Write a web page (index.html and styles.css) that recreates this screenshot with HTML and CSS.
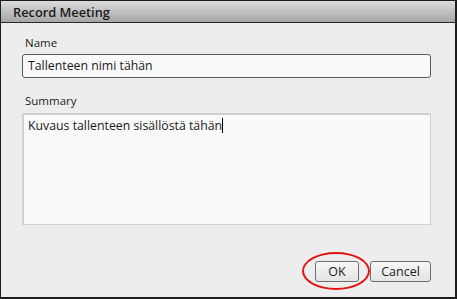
FILE: index.html
```html
<!DOCTYPE html>
<html>
<head>
<meta charset="utf-8">
<link rel="stylesheet" href="styles.css">
</head>
<body>
<div class="dialog">
  <div class="titlebar">Record Meeting</div>
  <div class="content">
    <div class="label label-name">Name</div>
    <div class="input">Tallenteen nimi tähän</div>
    <div class="label label-summary">Summary</div>
    <div class="textarea">Kuvaus tallenteen sisällöstä tähän<span class="caret"></span></div>
    <div class="buttons">
      <div class="btn btn-ok">OK<span class="circle"></span></div>
      <div class="btn btn-cancel">Cancel</div>
    </div>
  </div>
</div>
</body>
</html>
```

FILE: styles.css
```css
html, body {
  margin: 0;
  padding: 0;
  background: #ededed;
}
.dialog {
  width: 457px;
  height: 299px;
  box-sizing: border-box;
  border-top: 1px solid #1c1c1c;
  border-left: 1px solid #1c1c1c;
  border-right: 2px solid #1c1c1c;
  border-bottom: 2px solid #1c1c1c;
  background: #ededed;
  display: flex;
  flex-direction: column;
  font-family: "Open Sans", "DejaVu Sans", sans-serif;
  color: #222;
}
.titlebar {
  height: 21px;
  border-bottom: 1px solid #2a2a2a;
  background: linear-gradient(#dadada, #a6a6a6);
  font-weight: 600;
  font-size: 12.8px;
  line-height: 22px;
  padding-left: 12px;
  color: #1a1a1a;
}
.content {
  flex: 1;
  display: flex;
  flex-direction: column;
  padding: 0 24px 0 21px;
}
.label {
  font-size: 11.5px;
  line-height: 14px;
  padding-left: 3px;
  color: #222;
}
.label-name {
  margin-top: 13px;
}
.input {
  margin-top: 4px;
  height: 22px;
  box-sizing: content-box;
  border: 1px solid #5a5a5a;
  border-radius: 3px;
  background: #f9f9f9;
  font-size: 12.3px;
  line-height: 22px;
  padding-left: 5px;
  color: #1a1a1a;
}
.label-summary {
  margin-top: 16px;
}
.textarea {
  margin-top: 5px;
  height: 108px;
  border: 1px solid #d0d0d0;
  border-top: 2px solid #cfcfcf;
  border-left: 2px solid #cfcfcf;
  background: #f9f9f9;
  font-size: 12.3px;
  line-height: 20px;
  padding: 1px 0 0 4px;
  color: #1a1a1a;
}
.caret {
  display: inline-block;
  width: 1px;
  height: 15px;
  background: #000;
  vertical-align: -3px;
}
.buttons {
  margin-top: 36px;
  display: flex;
  justify-content: flex-end;
  gap: 11px;
}
.btn {
  position: relative;
  height: 19px;
  border: 1px solid #6e6e6e;
  border-radius: 3px;
  background: linear-gradient(#f7f7f7, #e4e4e4);
  font-size: 12.5px;
  line-height: 19px;
  text-align: center;
  color: #222;
}
.btn-ok {
  width: 42px;
}
.btn-cancel {
  width: 59px;
}
.circle {
  position: absolute;
  left: -14px;
  top: -10px;
  width: 64px;
  height: 34px;
  border: 2px solid #e41414;
  border-radius: 50%;
}
```
